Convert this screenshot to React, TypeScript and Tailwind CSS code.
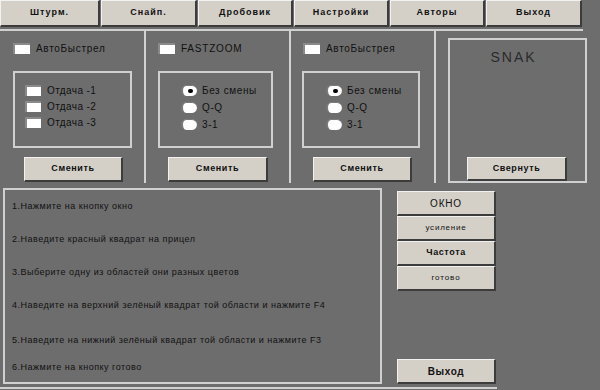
import React from 'react';

const Btn: React.FC<{ className?: string; children: React.ReactNode }> = ({ className = '', children }) => (
    <div
        className={`flex items-center justify-center bg-[#d4d0c8] text-[#111] border-t border-l border-t-[#f2f2f2] border-l-[#f2f2f2] border-b-2 border-r-2 border-b-[#3c3c3c] border-r-[#3c3c3c] ${className}`}
    >
        {children}
    </div>
);

const Check = ({ small = false }: { small?: boolean }) => (
    <span
        className={`block ${small ? 'w-[16px]' : 'w-[17px]'} h-[11px] bg-white border-t-2 border-l-2 border-t-[#8a8a8a] border-l-[#8a8a8a]`}
    />
);

const Radio = ({ checked = false }: { checked?: boolean }) => (
    <span className="flex items-center justify-center w-[16px] h-[11px] rounded-full bg-white border-t border-l-2 border-t-[#7a7a7a] border-l-[#7a7a7a]">
        {checked && <span className="block w-[5px] h-[4px] rounded-full bg-black" />}
    </span>
);

const Separator = () => <div className="w-[2px] self-stretch bg-[#d2d2d2]" />;

const steps = [
    { text: '1.Нажмите на кнопку окно', mt: 'mt-[11px]' },
    { text: '2.Наведите красный квадрат на прицел', mt: 'mt-[23px]' },
    { text: '3.Выберите одну из областей они разных цветов', mt: 'mt-[23px]' },
    { text: '4.Наведите на верхний зелёный квадрат той области и нажмите F4', mt: 'mt-[23px]' },
    { text: '5.Наведите на нижний зелёный квадрат той области и нажмите F3', mt: 'mt-[25px]' },
    { text: '6.Нажмите на кнопку готово', mt: 'mt-[17px]' },
];

export default function App() {
    const tabs = [
        { name: 'Штурм.', w: 'w-[100px]' },
        { name: 'Снайп.', w: 'w-[96px]' },
        { name: 'Дробовик', w: 'w-[95px]' },
        { name: 'Настройки', w: 'w-[95px]' },
        { name: 'Авторы', w: 'w-[95px]' },
        { name: 'Выход', w: 'w-[96px]' },
    ];

    return (
        <div className="w-[600px] h-[390px] overflow-hidden bg-[#6d6d6d] font-['Liberation_Sans',Arial,sans-serif] text-[#111]">
            {/* Top menu */}
            <div className="flex gap-[1px] h-[27px]">
                {tabs.map((t) => (
                    <Btn key={t.name} className={`${t.w} h-[27px] text-[9px] font-bold tracking-[1px]`}>
                        {t.name}
                    </Btn>
                ))}
            </div>
            <div className="mt-[2px] h-[2px] w-[583px] bg-[#d0d0d0]" />

            {/* Settings panels */}
            <div className="flex h-[152px]">
                {/* Panel 1 */}
                <div className="w-[144px] pl-[13px] pt-[12px] flex flex-col">
                    <div className="flex items-center h-[11px] gap-[6px]">
                        <Check />
                        <span className="text-[10px] tracking-[0.7px]">АвтоБыстрел</span>
                    </div>
                    <div className="mt-[17px] w-[119px] h-[77px] border-2 border-[#d0d0d0] pl-[10px] pt-[12px] flex flex-col gap-[5px]">
                        {['Отдача -1', 'Отдача -2', 'Отдача -3'].map((o) => (
                            <div key={o} className="flex items-center h-[11px] gap-[6px]">
                                <Check small />
                                <span className="text-[10px] tracking-[0.4px]">{o}</span>
                            </div>
                        ))}
                    </div>
                    <Btn className="mt-[9px] ml-[11px] w-[99px] h-[25px] text-[9px] font-bold tracking-[0.6px]">Сменить</Btn>
                </div>
                <Separator />

                {/* Panel 2 */}
                <div className="w-[143px] pl-[12px] pt-[12px] flex flex-col">
                    <div className="flex items-center h-[11px] gap-[6px]">
                        <Check />
                        <span className="text-[10px] tracking-[0.8px]">FASTZOOM</span>
                    </div>
                    <div className="mt-[17px] w-[115px] h-[77px] border-2 border-[#d0d0d0] pl-[21px] pt-[12px] flex flex-col gap-[6px]">
                        {['Без смены', 'Q-Q', '3-1'].map((o, i) => (
                            <div key={o} className="flex items-center h-[11px] gap-[5px]">
                                <Radio checked={i === 0} />
                                <span className="text-[10px] tracking-[0.6px]">{o}</span>
                            </div>
                        ))}
                    </div>
                    <Btn className="mt-[9px] ml-[10px] w-[100px] h-[25px] text-[9px] font-bold tracking-[0.6px]">Сменить</Btn>
                </div>
                <Separator />

                {/* Panel 3 */}
                <div className="w-[143px] pl-[11px] pt-[12px] flex flex-col">
                    <div className="flex items-center h-[11px] gap-[6px] pl-[1px]">
                        <Check />
                        <span className="text-[10px] tracking-[0.7px]">АвтоБыстрея</span>
                    </div>
                    <div className="mt-[17px] w-[118px] h-[77px] border-2 border-[#d0d0d0] pl-[22px] pt-[12px] flex flex-col gap-[6px]">
                        {['Без смены', 'Q-Q', '3-1'].map((o, i) => (
                            <div key={o} className="flex items-center h-[11px] gap-[5px]">
                                <Radio checked={i === 0} />
                                <span className="text-[10px] tracking-[0.6px]">{o}</span>
                            </div>
                        ))}
                    </div>
                    <Btn className="mt-[9px] ml-[11px] w-[99px] h-[25px] text-[9px] font-bold tracking-[0.6px]">Сменить</Btn>
                </div>
                <Separator />

                {/* Panel 4 */}
                <div className="flex-1 pl-[12px] pt-[7px]">
                    <div className="w-[139px] h-[145px] border-2 border-[#d0d0d0] flex flex-col">
                        <div className="mt-[9px] pr-[8px] text-center text-[14px] leading-[16px] tracking-[2px] text-[#2a2a2a]">SNAK</div>
                        <Btn className="mt-auto ml-[17px] w-[100px] h-[24px] text-[9px] font-bold tracking-[0.6px]">Свернуть</Btn>
                    </div>
                </div>
            </div>

            {/* Instructions and actions */}
            <div className="flex pl-[3px] pt-[5px]">
                <div className="w-[379px] h-[196px] border-2 border-[#d0d0d0] pl-[7px] flex flex-col">
                    {steps.map((s) => (
                        <div key={s.text} className={`${s.mt} text-[9px] leading-[10px] tracking-[0.5px]`}>
                            {s.text}
                        </div>
                    ))}
                </div>
                <div className="ml-[15px] pt-[3px] h-[196px] flex flex-col">
                    <Btn className="w-[99px] h-[25px] text-[10px] tracking-[0.8px]">ОКНО</Btn>
                    <Btn className="w-[99px] h-[25px] text-[8px] tracking-[0.8px]">усиление</Btn>
                    <Btn className="w-[99px] h-[25px] text-[9px] font-bold tracking-[0.6px]">Частота</Btn>
                    <Btn className="w-[99px] h-[25px] text-[8px] tracking-[0.9px]">готово</Btn>
                    <Btn className="mt-auto w-[99px] h-[25px] text-[10px] font-bold tracking-[0.6px]">Выход</Btn>
                </div>
            </div>
            <div className="mt-[3px] h-[2px] w-[497px] bg-[#d0d0d0]" />
        </div>
    );
}
